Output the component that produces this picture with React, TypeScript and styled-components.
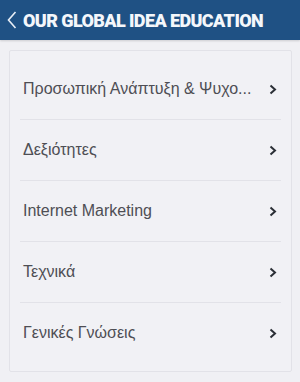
import React from 'react';
import styled, { createGlobalStyle } from 'styled-components';

const GlobalStyle = createGlobalStyle`
    body {
        margin: 0;
        background: #f0f0f4;
        font-family: 'Liberation Sans', Arial, sans-serif;
    }
`;

const Header = styled.header`
    height: 40px;
    background: #1f5184;
    display: flex;
    align-items: center;
    padding: 0 0 0 7px;
    gap: 6px;
    box-shadow: 0 1px 2px rgba(0, 0, 0, 0.15);
`;

const Title = styled.h1`
    margin: 0;
    color: #f4f7fb;
    font-family: Roboto, 'Liberation Sans', sans-serif;
    font-size: 18px;
    font-weight: 900;
    letter-spacing: -0.6px;
    white-space: nowrap;
`;

const Card = styled.div`
    margin: 10px 8px 0 9px;
    background: #f1f1f5;
    border: 1px solid #e2e2e8;
    border-radius: 2px;
    padding: 8px 10px;
`;

const Row = styled.div<{ $last?: boolean }>`
    height: 60px;
    display: flex;
    align-items: center;
    justify-content: space-between;
    border-bottom: ${(p) => (p.$last ? 'none' : '1px solid #e2e2e8')};
    padding: 0 4px 0 3px;
`;

const Label = styled.span`
    color: #4e4e54;
    font-size: 16px;
    white-space: nowrap;
`;

const items = [
    'Προσωπική Ανάπτυξη & Ψυχο...',
    'Δεξιότητες',
    'Internet Marketing',
    'Τεχνικά',
    'Γενικές Γνώσεις',
];

const Chevron = () => (
    <svg width="8" height="11" viewBox="0 0 8 11">
        <path d="M1.5 1.5 L6 5.5 L1.5 9.5" fill="none" stroke="#2b2f36" strokeWidth="2" />
    </svg>
);

const Back = () => (
    <svg width="10" height="18" viewBox="0 0 10 18">
        <path d="M8.5 1 L1.5 9 L8.5 17" fill="none" stroke="#e8eef6" strokeWidth="1.6" />
    </svg>
);

export default function App() {
    return (
        <>
            <GlobalStyle />
            <Header>
                <Back />
                <Title>OUR GLOBAL IDEA EDUCATION</Title>
            </Header>
            <Card>
                {items.map((item, i) => (
                    <Row key={item} $last={i === items.length - 1}>
                        <Label>{item}</Label>
                        <Chevron />
                    </Row>
                ))}
            </Card>
        </>
    );
}
